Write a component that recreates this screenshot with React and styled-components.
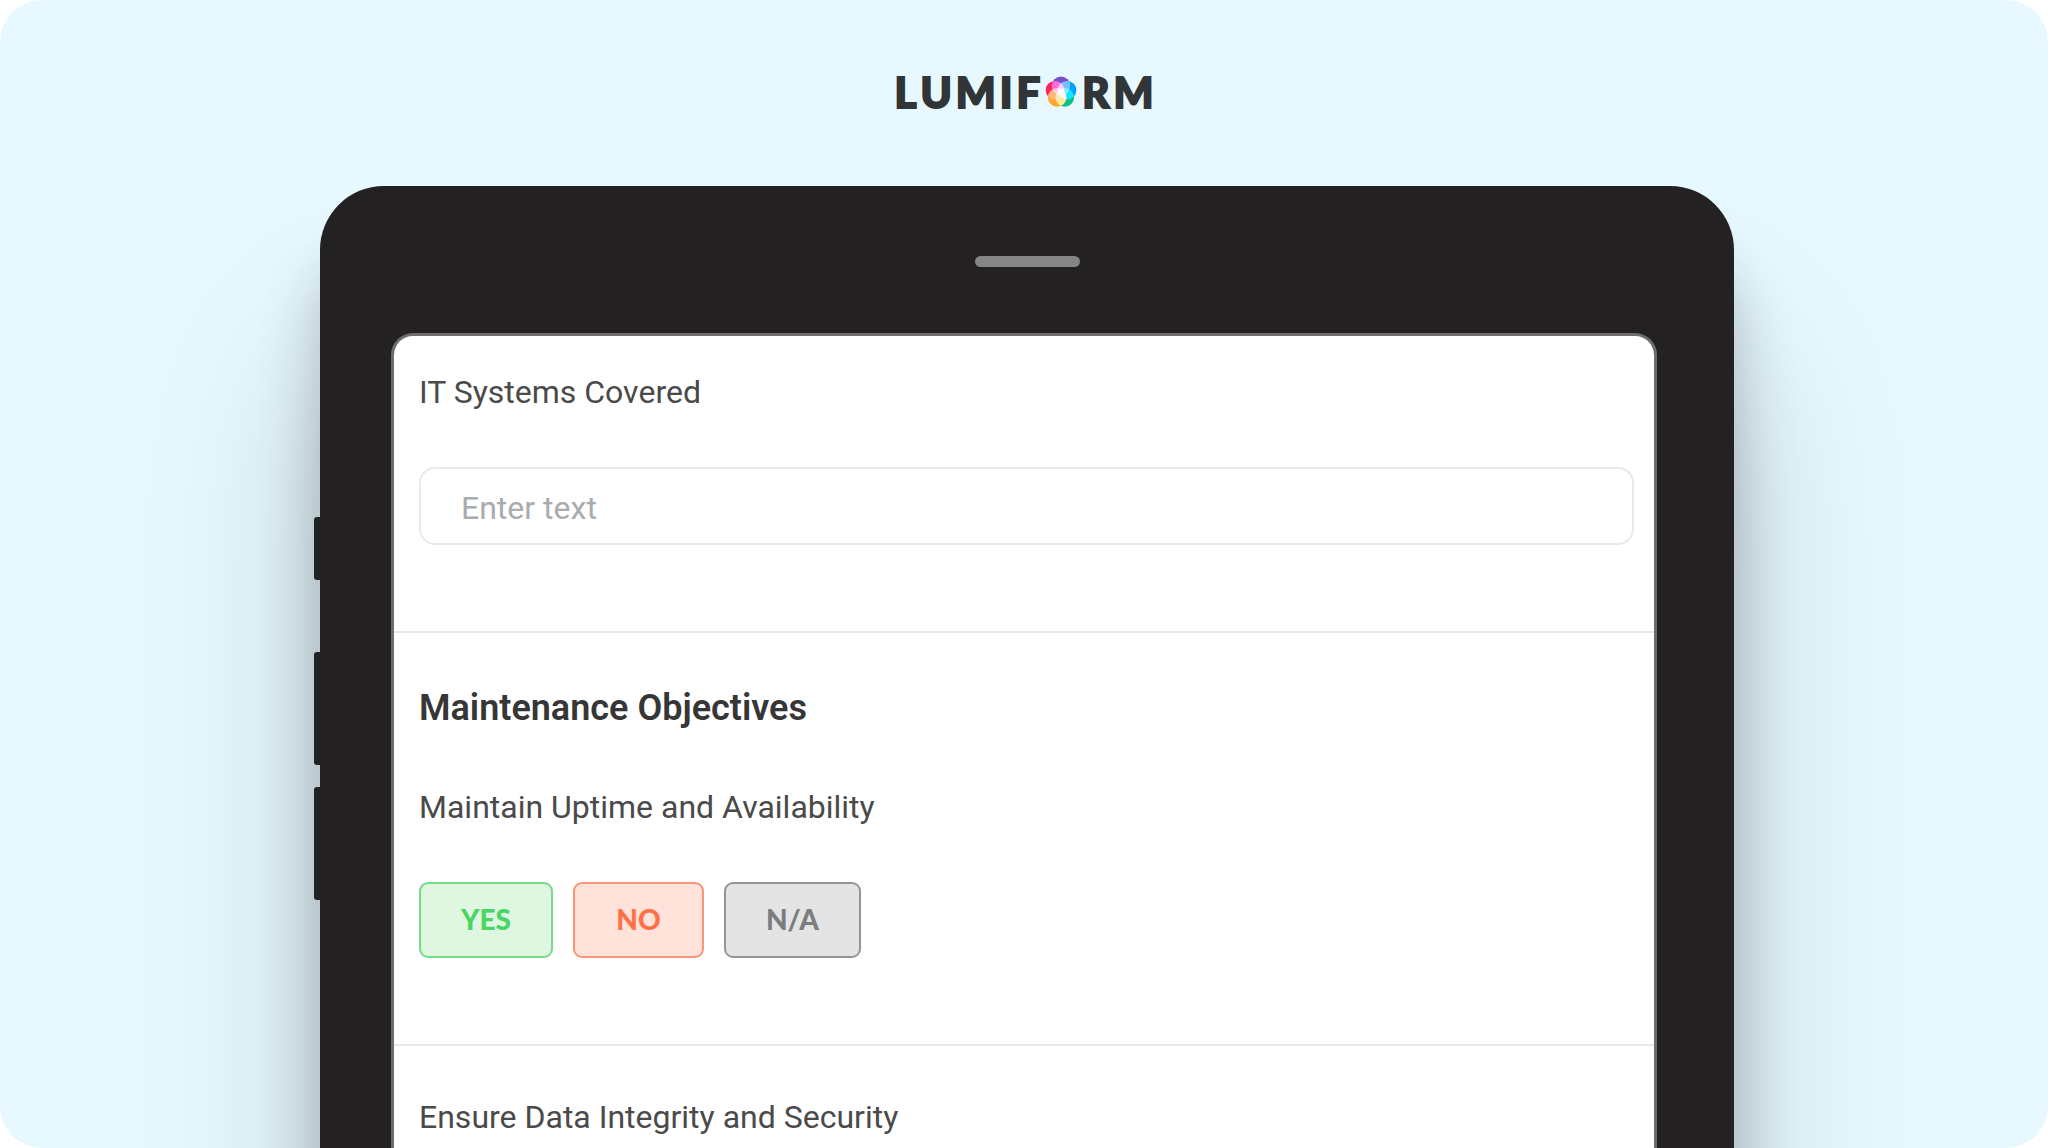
import React from 'react';
import styled, { createGlobalStyle } from 'styled-components';

const GlobalStyle = createGlobalStyle`
  *, *::before, *::after {
    box-sizing: border-box;
  }

  body {
    margin: 0;
    background: #fff;
    font-family: Roboto, 'Liberation Sans', sans-serif;
  }
`;

const Stage = styled.main`
  display: flex;
  flex-direction: column;
  height: 100vh;
  overflow: hidden;
  border-radius: 42px;
  background: #e7f9ff;
`;

const Header = styled.header`
  display: flex;
  justify-content: center;
  padding: 68px 0 70px;
`;

const Logo = styled.div`
  display: flex;
  align-items: center;
  gap: 4px;
  color: #313538;
  font-family: Lato, 'Open Sans', sans-serif;
  font-size: 42px;
  font-weight: 900;
  line-height: 48px;
  -webkit-text-stroke: 2px #313538;
`;

const LogoMark = styled.svg`
  width: 32px;
  height: 32px;
  margin: 0 1px;
  isolation: isolate;

  circle {
    mix-blend-mode: screen;
  }
`;

const Device = styled.div`
  position: relative;
  flex: 1 0 auto;
  margin: 0 314px 0 320px;
  padding-top: 70px;
  border-radius: 64px 64px 0 0;
  background: #232122;
  box-shadow:
    0 70px 60px rgba(0, 10, 0, 0.22),
    0 170px 180px rgba(0, 10, 0, 0.2);
`;

const Speaker = styled.div`
  width: 105px;
  height: 11px;
  margin: 0 auto 66px;
  border-radius: 6px;
  background: #868585;
`;

const SideButtons = styled.div`
  position: absolute;
  top: 331px;
  right: 100%;
  display: flex;
  flex-direction: column;
  gap: 22px;
`;

const SideButton = styled.span`
  width: 6px;
  height: ${props => (props.$short ? 63 : 113)}px;
  margin-bottom: ${props => (props.$short ? 50 : 0)}px;
  border-radius: 3px 0 0 3px;
  background: #1f2324;
`;

const Screen = styled.form`
  margin: 0 77px 0 71px;
  padding-bottom: 320px;
  border: 3px solid #6e6c6d;
  border-bottom: 0;
  border-radius: 22px 22px 0 0;
  background: #fff;
`;

const Section = styled.section`
  display: flex;
  flex-direction: column;
  gap: 55px;
  padding: ${props => (props.$first ? 36 : 51)}px 20px 86px 25px;

  & + & {
    border-top: 2px solid #e8e8e8;
  }
`;

const Title = styled.h2`
  margin: 0;
  color: #363636;
  font-size: 36px;
  font-weight: 600;
  line-height: 48px;
`;

const Question = styled.label`
  color: #4a4a4a;
  font-size: 32px;
  font-weight: 400;
  line-height: 40px;
`;

const TextInput = styled.input`
  width: 100%;
  height: 78px;
  padding: 4px 40px 0;
  border: 2px solid #e9e9e9;
  border-radius: 16px;
  outline: none;
  background: #fff;
  color: #4a4a4a;
  font: inherit;
  font-size: 32px;

  &::placeholder {
    color: #a9abaf;
    opacity: 1;
  }
`;

const Answers = styled.div`
  display: flex;
  gap: 20px;
`;

const tones = {
  yes: { text: '#48d664', border: '#74dc88', fill: '#dff7e1' },
  no: { text: '#ff7047', border: '#f99478', fill: '#ffe2da' },
  na: { text: '#7d7d7d', border: '#959595', fill: '#e4e4e4' },
};

const AnswerButton = styled.button`
  min-width: 131px;
  height: 76px;
  padding: 0 40px 2px;
  border: 2px solid ${props => tones[props.$tone].border};
  border-radius: 9px;
  background: ${props => tones[props.$tone].fill};
  color: ${props => tones[props.$tone].text};
  font-family: Lato, 'Open Sans', sans-serif;
  font-size: 28px;
  font-weight: 900;
  line-height: 40px;
  cursor: pointer;
`;

const LumiformLogo = () => (
  <Logo>
    {'LUMIF'.split('').map(letter => <span key={letter}>{letter}</span>)}
    <LogoMark viewBox="0 0 32 32" aria-label="O">
      <circle cx="16" cy="9.8" r="9.3" fill="#7850c8" />
      <circle cx="22" cy="14.2" r="9.3" fill="#00a2ff" />
      <circle cx="19.8" cy="21.4" r="9.3" fill="#0fbf85" />
      <circle cx="12.2" cy="21.4" r="9.3" fill="#ffa92b" />
      <circle cx="10" cy="14.2" r="9.3" fill="#f9265f" />
    </LogoMark>
    <span>R</span>
    <span>M</span>
  </Logo>
);

const App = () => (
  <>
    <GlobalStyle />
    <Stage>
      <Header>
        <LumiformLogo />
      </Header>
      <Device>
        <SideButtons>
          <SideButton $short />
          <SideButton />
          <SideButton />
        </SideButtons>
        <Speaker />
        <Screen>
          <Section $first>
            <Question htmlFor="systems">IT Systems Covered</Question>
            <TextInput id="systems" type="text" placeholder="Enter text" />
          </Section>
          <Section>
            <Title>Maintenance Objectives</Title>
            <Question as="div" id="uptime">Maintain Uptime and Availability</Question>
            <Answers role="group" aria-labelledby="uptime">
              <AnswerButton type="button" $tone="yes">YES</AnswerButton>
              <AnswerButton type="button" $tone="no">NO</AnswerButton>
              <AnswerButton type="button" $tone="na">N/A</AnswerButton>
            </Answers>
          </Section>
          <Section>
            <Question as="div">Ensure Data Integrity and Security</Question>
          </Section>
        </Screen>
      </Device>
    </Stage>
  </>
);

export default App;
